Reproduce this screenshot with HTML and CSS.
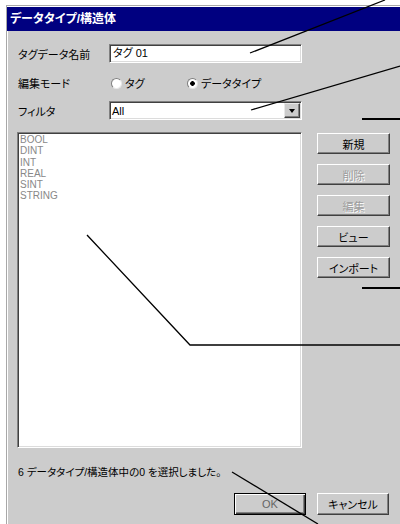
FILE: index.html
```html
<!DOCTYPE html>
<html lang="ja">
<head>
<meta charset="utf-8">
<link rel="stylesheet" href="styles.css">
</head>
<body>
<div class="dialog">
  <div class="title">データタイプ/構造体</div>
  <div class="content">
    <div class="row row-name">
      <span class="label">タグデータ名前</span>
      <div class="edit sunken">タグ 01</div>
    </div>
    <div class="row row-mode">
      <span class="label">編集モード</span>
      <span class="radio first"><i class="dot"></i>タグ</span>
      <span class="radio checked"><i class="dot"></i>データタイプ</span>
    </div>
    <div class="row row-filter">
      <span class="label">フィルタ</span>
      <div class="combo sunken">
        <span class="value">All</span>
        <span class="drop"><i class="arrow"></i></span>
      </div>
    </div>
    <div class="main">
      <ul class="list sunken">
        <li>BOOL</li>
        <li>DINT</li>
        <li>INT</li>
        <li>REAL</li>
        <li>SINT</li>
        <li>STRING</li>
      </ul>
      <div class="side">
        <button class="btn">新規</button>
        <button class="btn" disabled>削除</button>
        <button class="btn" disabled>編集</button>
        <button class="btn">ビュー</button>
        <button class="btn">インポート</button>
      </div>
    </div>
    <div class="status">6 データタイプ/構造体中の0 を選択しました。</div>
    <div class="footer">
      <button class="btn default">OK</button>
      <button class="btn">キャンセル</button>
    </div>
  </div>
</div>
<!-- annotation lines drawn over the dialog -->
<svg class="callouts" width="400" height="524" viewBox="0 0 400 524">
  <line x1="250" y1="53" x2="385" y2="0"/>
  <line x1="251" y1="110" x2="400" y2="66"/>
  <line class="flat" x1="362" y1="119" x2="400" y2="119"/>
  <line class="flat" x1="362" y1="288" x2="400" y2="288"/>
  <polyline points="87,235 190,345 400,345"/>
  <line x1="232" y1="472" x2="318" y2="524"/>
</svg>
</body>
</html>
```

FILE: styles.css
```css
html, body {
  margin: 0;
  padding: 0;
}

body {
  width: 400px;
  height: 524px;
  overflow: hidden;
  background: #fff;
  position: relative;
  font-family: "Liberation Sans", "Noto Sans CJK JP", sans-serif;
  font-size: 11px;
  font-feature-settings: "palt";
  color: #000;
}

.dialog {
  margin: 5px 0 0 6px;
  height: 519px;
  border-top: 1px solid #a8a8a8;
  border-left: 1px solid #a8a8a8;
  padding: 1px 0 0 1px;
  background: #ccc;
  box-shadow: inset 1px 1px 0 #fff;
}

.title {
  height: 24px;
  margin-left: -1px;
  padding-left: 3px;
  line-height: 24px;
  background: #000080;
  color: #fff;
  font-weight: bold;
  font-size: 12px;
}

.content {
  padding: 13px 0 0 10px;
}

.row {
  display: flex;
  align-items: center;
  height: 19px;
}

.row-mode {
  height: 20px;
  margin-top: 10px;
}

.row-filter {
  margin-top: 8px;
}

.label {
  width: 91px;
}

.sunken {
  box-sizing: border-box;
  border: 1px solid;
  border-color: #808080 #fff #fff #808080;
  box-shadow: inset 1px 1px 0 #404040, inset -1px -1px 0 #dcdcdc;
  background: #fff;
}

.edit {
  width: 193px;
  height: 19px;
  padding: 0 3px;
  line-height: 17px;
}

.radio {
  display: flex;
  align-items: center;
}

.radio.first {
  width: 78px;
}

.dot {
  box-sizing: border-box;
  width: 11px;
  height: 11px;
  margin: 0 3px 0 2px;
  border-radius: 50%;
  border: 1px solid;
  border-color: #808080 #e8e8e8 #e8e8e8 #808080;
  background: #fff;
}

.checked .dot {
  margin-left: 0;
  background: radial-gradient(circle, #000 0 2px, #fff 2.6px);
}

.combo {
  display: flex;
  align-items: center;
  justify-content: space-between;
  width: 193px;
  height: 19px;
  padding: 0 1px 0 2px;
}

.drop {
  box-sizing: border-box;
  display: flex;
  align-items: center;
  justify-content: center;
  width: 16px;
  height: 15px;
  background: #ccc;
  border: 1px solid;
  border-color: #e8e8e8 #404040 #404040 #e8e8e8;
  box-shadow: inset -1px -1px 0 #808080;
}

.arrow {
  width: 0;
  height: 0;
  border-left: 3.5px solid transparent;
  border-right: 3.5px solid transparent;
  border-top: 4px solid #000;
}

.main {
  display: flex;
  margin-top: 12px;
}

.list {
  width: 285px;
  height: 316px;
  margin: 0 0 0 -1px;
  padding: 1px 0 0 2px;
  list-style: none;
  font-size: 10px;
  line-height: 11.3px;
  color: #888;
}

.side {
  display: flex;
  flex-direction: column;
  gap: 10px;
  margin-left: 15px;
  padding-top: 1px;
}

.btn {
  box-sizing: border-box;
  width: 73px;
  height: 21px;
  padding: 0;
  font: inherit;
  color: #000;
  background: #ccc;
  border: 1px solid;
  border-color: #fff #404040 #404040 #fff;
  box-shadow: inset -1px -1px 0 #808080;
}

.btn:disabled {
  color: #9c9c9c;
  text-shadow: 1px 1px 0 #fff;
}

.status {
  margin-top: 17px;
  height: 14px;
  line-height: 14px;
  font-size: 10.5px;
}

.footer {
  display: flex;
  gap: 11px;
  margin-top: 14px;
  padding-left: 216px;
}

.footer .btn {
  width: 72px;
  height: 22px;
}

.btn.default {
  color: #666;
  border-color: #000;
  box-shadow: inset 1px 1px 0 #fff, inset -1px -1px 0 #404040, inset -2px -2px 0 #808080;
}

.callouts {
  position: absolute;
  top: 0;
  left: 0;
  pointer-events: none;
}

.callouts line,
.callouts polyline {
  stroke: #000;
  stroke-width: 1.3;
  fill: none;
}

.callouts .flat {
  stroke-width: 2;
}
```
